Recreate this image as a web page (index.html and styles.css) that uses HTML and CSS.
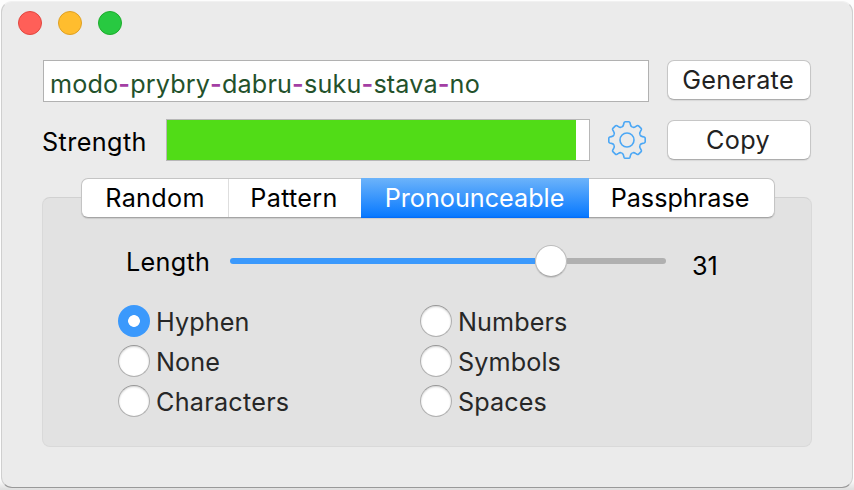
FILE: index.html
```html
<!DOCTYPE html>
<html lang="en">
<head>
<meta charset="utf-8">
<title>Password Generator</title>
<link rel="stylesheet" href="styles.css">
</head>
<body>
<main class="window">
  <header class="titlebar">
    <span class="light close"></span>
    <span class="light minimize"></span>
    <span class="light zoom"></span>
  </header>
  <section class="top">
    <div class="password">modo<i>-</i>prybry<i>-</i>dabru<i>-</i>suku<i>-</i>stava<i>-</i>no</div>
    <button class="button">Generate</button>
    <div class="strength">
      <span class="strength-label">Strength</span>
      <div class="meter"><div class="meter-fill"></div></div>
      <svg class="gear" viewBox="-20 -20 40 40">
        <defs><path id="tooth" d="M-5.36-12.93C-4-13.5-3.6-14.3-3.4-15.5L-3-17.2Q-2.7-18.2-1.8-18.2H1.8Q2.7-18.2 3-17.2L3.4-15.5C3.6-14.3 4-13.5 5.36-12.93"/></defs>
        <use href="#tooth"/>
        <use href="#tooth" transform="rotate(45)"/>
        <use href="#tooth" transform="rotate(90)"/>
        <use href="#tooth" transform="rotate(135)"/>
        <use href="#tooth" transform="rotate(180)"/>
        <use href="#tooth" transform="rotate(225)"/>
        <use href="#tooth" transform="rotate(270)"/>
        <use href="#tooth" transform="rotate(315)"/>
        <circle r="7"/>
      </svg>
    </div>
    <button class="button">Copy</button>
  </section>
  <section class="panel">
    <nav class="tabs">
      <span class="tab random">Random</span>
      <span class="tab pattern">Pattern</span>
      <span class="tab pronounceable">Pronounceable</span>
      <span class="tab passphrase">Passphrase</span>
    </nav>
    <div class="length">
      <span class="length-label">Length</span>
      <div class="slider"><div class="track-on"></div><div class="knob"></div><div class="track-off"></div></div>
      <span class="value">31</span>
    </div>
    <div class="options">
      <label class="option"><span class="radio checked"></span><span>Hyphen</span></label>
      <label class="option"><span class="radio"></span><span>Numbers</span></label>
      <label class="option"><span class="radio"></span><span>None</span></label>
      <label class="option"><span class="radio"></span><span>Symbols</span></label>
      <label class="option"><span class="radio"></span><span class="wide">Characters</span></label>
      <label class="option"><span class="radio"></span><span>Spaces</span></label>
    </div>
  </section>
</main>
</body>
</html>
```
FILE: styles.css
```css
* { box-sizing: border-box; }
html, body { height: 100%; overflow: hidden; }
body {
  margin: 0;
  padding: 1px 1px 2px;
  background: linear-gradient(#fdfdfd 0 480px, #e0e0e0 489px);
  font: 25.2px/30px Inter, sans-serif;
  color: #000;
}
.window {
  height: 487px;
  background: #ebebeb;
  border: 1px solid #cfcfcf;
  border-top-color: #f1f1f1;
  border-bottom-color: #999;
  border-radius: 11px;
}
.titlebar { display: flex; gap: 16px; padding: 9px 0 0 16px; height: 58px; }
.light { width: 24px; height: 24px; border-radius: 50%; border: 1px solid; }
.close { background: #ff5f58; border-color: #e2463f; }
.minimize { background: #ffbd2e; border-color: #dfa023; }
.zoom { background: #28c941; border-color: #1dac2c; }
.top {
  display: grid;
  grid-template-columns: 606px 144px;
  grid-template-rows: 42px 42px;
  gap: 17px 18px;
  margin-left: 41px;
}
.password {
  background: #fff;
  border: 1px solid #b1b1b1;
  padding: 8px 0 0 6px;
  color: #23512b;
  letter-spacing: .15px;
  white-space: nowrap;
}
.password i { font-style: normal; font-weight: 600; color: #a33fa4; }
.button {
  height: 40px;
  margin: 0;
  padding: 0;
  border: 1px solid #c6c6c6;
  border-bottom-color: #adadad;
  border-radius: 7px;
  background: #fff;
  box-shadow: 0 1px 1px rgba(0, 0, 0, .08);
  font: inherit;
  letter-spacing: .3px;
  padding-right: 2px;
  color: #222;
}
.top .button:last-child { margin-top: 1px; }
.strength { display: flex; }
.strength-label { width: 124px; margin-left: -1px; padding-top: 8px; letter-spacing: .4px; }
.meter { width: 424px; border: 1px solid #b7b7b7; background: #fff; }
.meter-fill { width: 409px; height: 100%; background: #51dc17; }
.gear { width: 40px; height: 40px; margin: 1px 0 0 17px; fill: none; stroke: #4ba7f5; stroke-width: 1.6; }
.panel {
  width: 770px;
  height: 250px;
  margin: 36px 0 0 40px;
  border: 1px solid #d9d9d9;
  border-top-color: #d1d1d1;
  border-radius: 8px;
  background: #e2e2e2;
}
.tabs {
  display: flex;
  width: 694px;
  height: 40px;
  margin: -20px 0 0 38px;
  border: 1px solid #c4c4c4;
  border-bottom-color: #a5a5a5;
  border-radius: 7px;
  background: #fff;
  box-shadow: 0 1px 1px rgba(0, 0, 0, .1);
}
.tab { display: flex; justify-content: center; padding-top: 4px; }
.random { width: 147px; border-right: 1px solid #dedede; letter-spacing: .3px; }
.pattern { width: 132px; padding-right: 2px; letter-spacing: .3px; }
.pronounceable {
  width: 228px;
  margin: -1px 0;
  padding: 5px 1px 0 0;
  background: linear-gradient(#6cb3fa, #0a7aff 95%, #0068f5);
  color: #fff;
}
.passphrase { width: 185px; padding-right: 3px; }
.length { display: flex; height: 86px; }
.length-label { width: 187px; padding: 29px 0 0 83px; letter-spacing: .3px; }
.slider { display: flex; align-items: center; width: 436px; height: 86px; }
.track-on { width: 305px; height: 6px; border-radius: 3px 0 0 3px; background: #3b99fc; }
.knob {
  width: 32px;
  height: 32px;
  border-radius: 50%;
  border: 1px solid #bcbcbc;
  border-bottom-color: #a8a8a8;
  background: #fff;
  box-shadow: 0 1px 1px rgba(0, 0, 0, .12);
}
.track-off { flex: 1; height: 6px; border-radius: 0 3px 3px 0; background: #b0b0b0; }
.value { padding: 33px 0 0 26px; }
.options {
  display: grid;
  grid-template-columns: 302px 200px;
  grid-auto-rows: 40px;
  margin: 1px 0 0 75px;
  color: #272727;
  letter-spacing: .1px;
}
.option { display: flex; }
.option > :last-child { padding: 2px 0 0 6px; }
.wide { letter-spacing: .25px; }
.radio {
  width: 32px;
  height: 32px;
  border: 1px solid #b0b0b0;
  border-top-color: #979797;
  border-radius: 50%;
  background: #fff;
  box-shadow: inset 0 1px 2px rgba(0, 0, 0, .18);
}
.checked {
  border: 0;
  background: radial-gradient(circle, #fff 0 5.5px, #3b99fc 6.2px);
  box-shadow: none;
}
```
